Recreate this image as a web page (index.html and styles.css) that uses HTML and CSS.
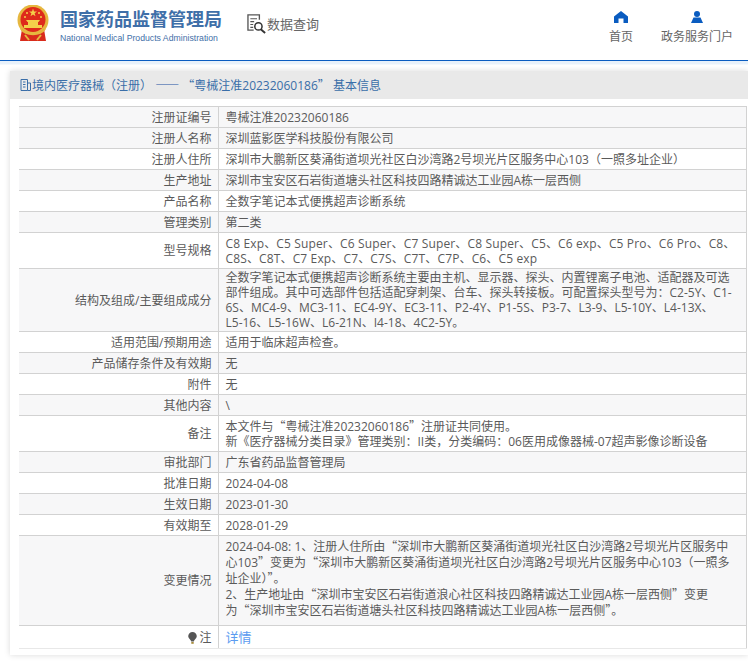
FILE: index.html
```html
<!DOCTYPE html>
<html lang="zh-CN">
<head>
<meta charset="utf-8">
<title>国家药品监督管理局</title>
<link rel="stylesheet" href="styles.css">
</head>
<body>
<header class="header">
  <div class="brand">
    <svg class="emblem" viewBox="0 0 32 36" aria-hidden="true">
      <circle cx="16" cy="15" r="15.500" fill="#e6b73f"/>
      <circle cx="16" cy="14.500" r="12.500" fill="#de2a1b"/>
      <polygon points="16,3.500 17,6.500 20,6.500 17.600,8.300 18.500,11.200 16,9.500 13.500,11.200 14.400,8.300 12,6.500 15,6.500" fill="#f4d04a"/>
      <circle cx="10" cy="8" r="1" fill="#f4d04a"/><circle cx="22" cy="8" r="1" fill="#f4d04a"/>
      <circle cx="8" cy="12" r="1" fill="#f4d04a"/><circle cx="24" cy="12" r="1" fill="#f4d04a"/>
      <path d="M9 15H23L21.500 17H10.500ZM11 17H21V20H11ZM7 20H25V23H7Z" fill="#f4d04a"/>
      <path d="M5 24C9 31 23 31 27 24L29 36H3Z" fill="#d92b1c"/>
      <path d="M4 24C9 31 23 31 28 24M8 30L12 35M24 30L20 35" fill="none" stroke="#e6b73f" stroke-width="2"/>
    </svg>
    <div class="brand-text">
      <div class="brand-cn">国家药品监督管理局</div>
      <div class="brand-en">National Medical Products Administration</div>
    </div>
    <div class="query">
      <svg class="query-icon" viewBox="0 0 21 21" aria-hidden="true">
        <path d="M13 6V1H1V17H7" fill="none" stroke="#555" stroke-width="1.400"/>
        <path d="M3.500 5h7M3.500 8h4M3.500 11h3M3.500 14h3" stroke="#555" stroke-width="1.200"/>
        <circle cx="12" cy="13" r="3.800" fill="#fff" stroke="#333" stroke-width="1.600"/>
        <path d="M14.500 16L19 20" stroke="#333" stroke-width="2"/>
      </svg>
      <span>数据查询</span>
    </div>
  </div>
  <nav class="nav">
    <div class="nav-item nav-home">
      <svg class="nav-icon" viewBox="0 0 14 12" aria-hidden="true">
        <path d="M7 0L14 5.500V12H9.500V7.500H4.500V12H0V5.500Z" fill="#0a5cc0"/>
      </svg>
      <span>首页</span>
    </div>
    <div class="nav-item nav-gov">
      <svg class="nav-icon" viewBox="0 0 14 12" aria-hidden="true">
        <circle cx="7" cy="3" r="3" fill="#0a5cc0"/>
        <path d="M3.500 6.500H10.500L13 12H1Z" fill="#0a5cc0"/>
      </svg>
      <span>政务服务门户</span>
    </div>
  </nav>
</header>
<div class="header-rule"></div>
<main class="panel">
  <div class="panel-title">
    <svg class="title-icon" viewBox="0 0 11 12" aria-hidden="true">
      <path d="M1 .500H7.500V11.500H1ZM7.500 4H10.500V11.500H7.500M3 3H5.500M3 5.500H5.500M3 8H5.500" fill="none" stroke="#3a6ea8"/>
    </svg>
    <span>境内医疗器械（注册） <span class="cjk dash">——</span> <span class="cjk">“</span>粤械注准20232060186<span class="cjk">”</span> 基本信息</span>
  </div>
  <table class="info">
    <tr class="r21"><th>注册证编号</th><td>粤械注准20232060186</td></tr>
    <tr class="r21"><th>注册人名称</th><td>深圳蓝影医学科技股份有限公司</td></tr>
    <tr class="r21"><th>注册人住所</th><td>深圳市大鹏新区葵涌街道坝光社区白沙湾路2号坝光片区服务中心103（一照多址企业）</td></tr>
    <tr class="r21"><th>生产地址</th><td>深圳市宝安区石岩街道塘头社区科技四路精诚达工业园A栋一层西侧</td></tr>
    <tr class="r21"><th>产品名称</th><td>全数字笔记本式便携超声诊断系统</td></tr>
    <tr class="r21"><th>管理类别</th><td>第二类</td></tr>
    <tr class="r36"><th>型号规格</th><td class="specs">C8 Exp、C5 Super、C6 Super、C7 Super、C8 Super、C5、C6 exp、C5 Pro、C6 Pro、C8、C8S、C8T、C7 Exp、C7、C7S、C7T、C7P、C6、C5 exp</td></tr>
    <tr class="r63"><th>结构及组成/主要组成成分</th><td>全数字笔记本式便携超声诊断系统主要由主机、显示器、探头、内置锂离子电池、适配器及可选部件组成。其中可选部件包括适配穿刺架、台车、探头转接板。可配置探头型号为：C2-5Y、C1-6S、MC4-9、MC3-11、EC4-9Y、EC3-11、P2-4Y、P1-5S、P3-7、L3-9、L5-10Y、L4-13X、<span class="nb">L5-16</span>、L5-16W、L6-21N、I4-18、4C2-5Y。</td></tr>
    <tr class="r21"><th>适用范围/预期用途</th><td>适用于临床超声检查。</td></tr>
    <tr class="r21"><th>产品储存条件及有效期</th><td>无</td></tr>
    <tr class="r21"><th>附件</th><td>无</td></tr>
    <tr class="r21"><th>其他内容</th><td>\</td></tr>
    <tr class="r36"><th>备注</th><td>本文件与<span class="cjk">“</span>粤械注准20232060186<span class="cjk">”</span>注册证共同使用。<br>新《医疗器械分类目录》管理类别：II类，分类编码：06医用成像器械-07超声影像诊断设备</td></tr>
    <tr class="r21"><th>审批部门</th><td>广东省药品监督管理局</td></tr>
    <tr class="r21"><th>批准日期</th><td>2024-04-08</td></tr>
    <tr class="r21"><th>生效日期</th><td>2023-01-30</td></tr>
    <tr class="r21"><th>有效期至</th><td>2028-01-29</td></tr>
    <tr class="change"><th>变更情况</th><td>2024-04-08: 1、注册人住所由<span class="cjk">“</span>深圳市大鹏新区葵涌街道坝光社区白沙湾路2号坝光片区服务中心103<span class="cjk">”</span>变更为<span class="cjk">“</span>深圳市大鹏新区葵涌街道坝光社区白沙湾路2号坝光片区服务中心103（一照多址企业）<span class="cjk">”</span>。<br>2、生产地址由<span class="cjk">“</span>深圳市宝安区石岩街道浪心社区科技四路精诚达工业园A栋一层西侧<span class="cjk">”</span>变更<span class="nb">为<span class="cjk">“</span>深圳</span>市宝安区石岩街道塘头社区科技四路精诚达工业园A栋一层西侧<span class="cjk">”</span>。</td></tr>
    <tr class="note"><th><svg class="bulb" viewBox="0 0 9 12" aria-hidden="true"><path d="M4.500 0A4.300 4.300 0 0 1 8.800 4.300C8.800 6.500 6 8 5.800 9.500H3.200C3 8 .2 6.500 .2 4.300A4.300 4.300 0 0 1 4.500 0Z" fill="#555"/><rect x="3.300" y="10" width="2.400" height="1.800" fill="#a58a3a"/></svg>注</th><td><span class="link">详情</span></td></tr>
  </table>
</main>
</body>
</html>
```
FILE: styles.css
```css
* { box-sizing: border-box; }
html, body { margin: 0; padding: 0; }
body {
  width: 748px;
  height: 662px;
  overflow: hidden;
  background: #fff;
  font-family: "Open Sans", "Noto Sans CJK SC", sans-serif;
  color: #5a5a5a;
}
.cjk { font-family: "Noto Sans CJK SC", sans-serif; }
.dash { color: #1f57a8; }
.nb { white-space: nowrap; }
.specs { letter-spacing: .14px; }
.header {
  height: 60px;
  display: flex;
  justify-content: space-between;
  padding: 5px 0 0 17px;
}
.brand { display: flex; align-items: flex-start; }
.emblem { width: 32px; height: 36px; margin-right: 11px; }
.brand-text { width: 160px; padding-top: 3px; }
.brand-cn {
  font-size: 18px;
  line-height: 22px;
  font-weight: 700;
  color: #3f6fa8;
  white-space: nowrap;
}
.brand-en {
  font-family: "Liberation Sans", sans-serif;
  font-size: 8.7px;
  line-height: 12px;
  margin-top: 2px;
  color: #3f6fa8;
  white-space: nowrap;
}
.query {
  display: flex;
  align-items: center;
  margin: 9px 0 0 27px;
  font-size: 13px;
  line-height: 20px;
  color: #666;
}
.query-icon { width: 20px; height: 20px; }
.nav { display: flex; padding-top: 6px; }
.nav-item {
  display: flex;
  flex-direction: column;
  align-items: center;
  font-size: 12px;
  line-height: 18px;
  color: #666;
}
.nav-home { margin-right: 28px; }
.nav-gov { margin-right: 15px; }
.nav-icon { width: 14px; height: 12px; margin-bottom: 5px; }
.header-rule {
  height: 11px;
  border-top: 1px solid #0a5cc0;
  background: linear-gradient(#e8f1fa 0, #e8f1fa 3px, #fff 4px);
}
.panel {
  margin: 0 0 0 10px;
  width: 738px;
  height: 584px;
  background: #fff;
  box-shadow: 0 0 6px rgba(0, 0, 0, .15);
}
.panel-title {
  height: 28px;
  display: flex;
  align-items: center;
  gap: 1px;
  padding-left: 10px;
  background: #e9e9e9;
  color: #3a6ea8;
  font-size: 12px;
  white-space: nowrap;
}
.title-icon { width: 11px; height: 12px; }
.info {
  width: 728px;
  margin: 7px 0 0 9px;
  border-collapse: collapse;
  table-layout: fixed;
  font-size: 12px;
  line-height: 15px;
  border-right: 1px solid #d2d2d2;
}
.info th, .info td {
  border-top: 1px solid #d2d2d2;
  border-bottom: 1px solid #d2d2d2;
  padding: 0 7px;
  font-weight: 400;
  vertical-align: middle;
}
.info th {
  width: 199px;
  text-align: right;
  padding-right: 6px;
  border-right: 1px solid #d2d2d2;
}
.info tr:nth-child(even),
.info tr:first-child { background: #f7f7f8; }
.r21 th, .r21 td { height: 21px; }
.r36 th, .r36 td { height: 36px; }
.r63 th, .r63 td { height: 63px; }
.change th, .change td { height: 90px; }
.change td { padding-bottom: 6px; }
.note th, .note td { height: 23px; border-bottom-color: #e8e8e8; }
.note td { font-size: 13px; }
.bulb { width: 9px; height: 12px; margin-right: 2px; vertical-align: -2px; }
.link { color: #5b9bf0; }
```
